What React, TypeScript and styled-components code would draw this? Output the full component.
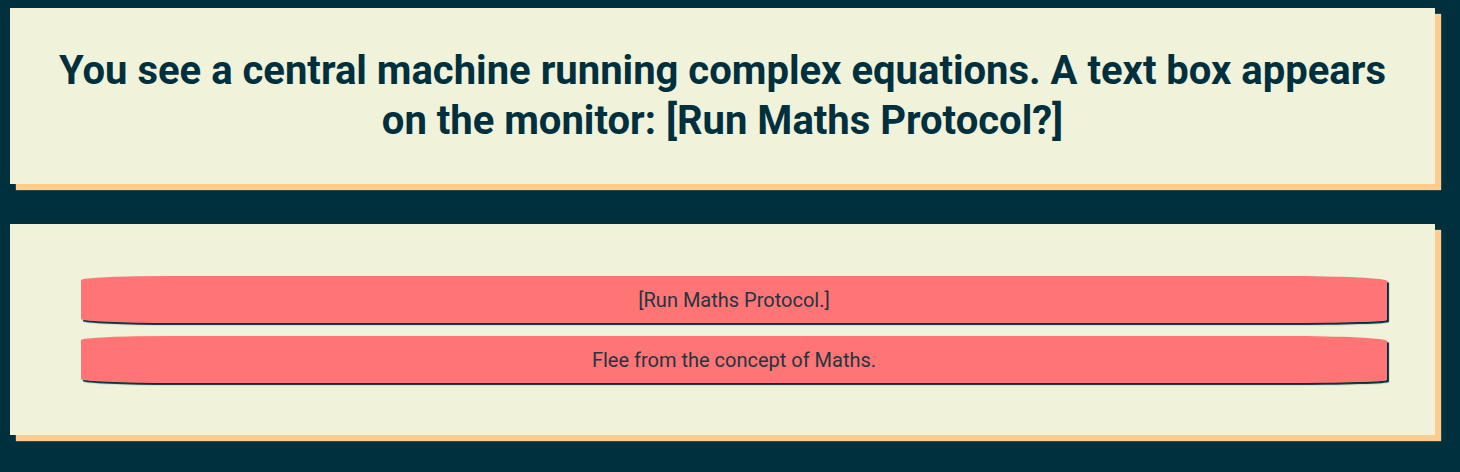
import React from 'react';
import styled, { createGlobalStyle } from 'styled-components';

const GlobalStyle = createGlobalStyle`
  html, body {
    margin: 0;
    padding: 0;
    background: #00303d;
    font-family: Roboto, "Liberation Sans", sans-serif;
  }
`;

const Page = styled.div`
  display: flex;
  flex-direction: column;
  gap: 40px;
  padding: 8px 25px 30px 10px;
`;

const Card = styled.section`
  background: #f0f2da;
  box-shadow: 6px 6px 1px #ffcc8f, 6px 6px 1px 0.5px rgba(0, 48, 61, 0.4);
`;

const PromptCard = styled(Card)`
  padding: 38px 40px;
`;

const Prompt = styled.h1`
  margin: 0;
  text-align: center;
  color: #00303d;
  font-size: 40px;
  font-weight: 700;
  line-height: 50px;
`;

const ChoiceCard = styled(Card)`
  display: flex;
  flex-direction: column;
  gap: 13px;
  padding: 52px 48px 52px 71px;
`;

const Choice = styled.button`
  display: block;
  width: 100%;
  height: 47px;
  border: none;
  background: #ff7575;
  color: #22363f;
  font-family: Roboto, "Liberation Sans", sans-serif;
  font-size: 20px;
  cursor: pointer;
  border-radius: 90px 100px 100px 90px / 4px 5px 3px 4px;
  box-shadow: 2px 2px 1px #00303d;

  &:hover {
    background: #ff6666;
  }
`;

const choices = ['[Run Maths Protocol.]', 'Flee from the concept of Maths.'];

const App: React.FC = () => {
  return (
    <>
      <GlobalStyle />
      <Page>
        <PromptCard>
          <Prompt>
            You see a central machine running complex equations. A text box appears on the monitor: [Run Maths
            Protocol?]
          </Prompt>
        </PromptCard>
        <ChoiceCard>
          {choices.map((c) => (
            <Choice key={c}>{c}</Choice>
          ))}
        </ChoiceCard>
      </Page>
    </>
  );
};

export default App;
